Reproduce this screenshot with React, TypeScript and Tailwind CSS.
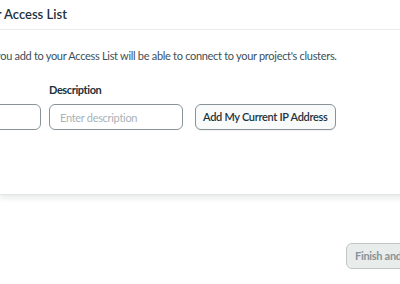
const App = () => {
    return (
        <div className="relative w-[400px] h-[284px] overflow-hidden bg-white font-['Lato','Liberation_Sans',sans-serif] text-[#21313c]">
            {/* Access list card */}
            <div className="w-[520px] bg-white border-b border-[#e1e5e4] shadow-[0_3px_6px_rgba(0,30,43,0.10)]">
                <div className="h-[30px] flex items-center border-b border-[#e8edeb] whitespace-nowrap">
                    <h2 className="-ml-[109px] text-[13px] font-semibold leading-none">
                        Add entries to your Access List
                    </h2>
                </div>

                <div className="pt-[19px] pb-[64px] whitespace-nowrap">
                    <p className="-ml-[91px] text-[11px] tracking-[-0.3px] leading-[14px] text-[#3d4f58]">
                        Only an IP address you add to your Access List will be able to connect to your project's clusters.
                    </p>

                    <div className="mt-[20px] -ml-[93px] flex items-end">
                        <div className="flex flex-col w-[134px]">
                            <label className="text-[11px] font-bold tracking-[-0.4px] leading-[14px] mb-[7px]">IP Address</label>
                            <input
                                className="h-[26px] rounded-[6px] border border-[#889397] px-[10px] text-[11px] tracking-[-0.3px] outline-none"
                                placeholder="Enter IP address"
                            />
                        </div>
                        <div className="flex flex-col w-[134px] ml-[8px]">
                            <label className="text-[11px] font-bold tracking-[-0.4px] leading-[14px] mb-[7px]">Description</label>
                            <input
                                className="h-[26px] rounded-[6px] border border-[#889397] px-[10px] text-[11px] tracking-[-0.3px] outline-none placeholder:text-[#a9b3b8]"
                                placeholder="Enter description"
                            />
                        </div>
                        <button className="ml-[12px] h-[26px] px-[7px] rounded-[6px] border border-[#889397] bg-[#f9fbfa] text-[11px] font-semibold tracking-[-0.3px] text-[#21313c] shadow-[0_1px_1px_rgba(0,0,0,0.06)]">
                            Add My Current IP Address
                        </button>
                    </div>
                </div>
            </div>

            {/* Footer */}
            <div className="mt-[48px] pl-[346px] flex whitespace-nowrap">
                <button className="h-[26px] px-[8px] rounded-[6px] border border-[#c1c7c6] bg-[#e8edeb] text-[11px] font-bold tracking-[-0.3px] text-[#889397]">
                    Finish and Close
                </button>
            </div>
        </div>
    );
};

export default App;
